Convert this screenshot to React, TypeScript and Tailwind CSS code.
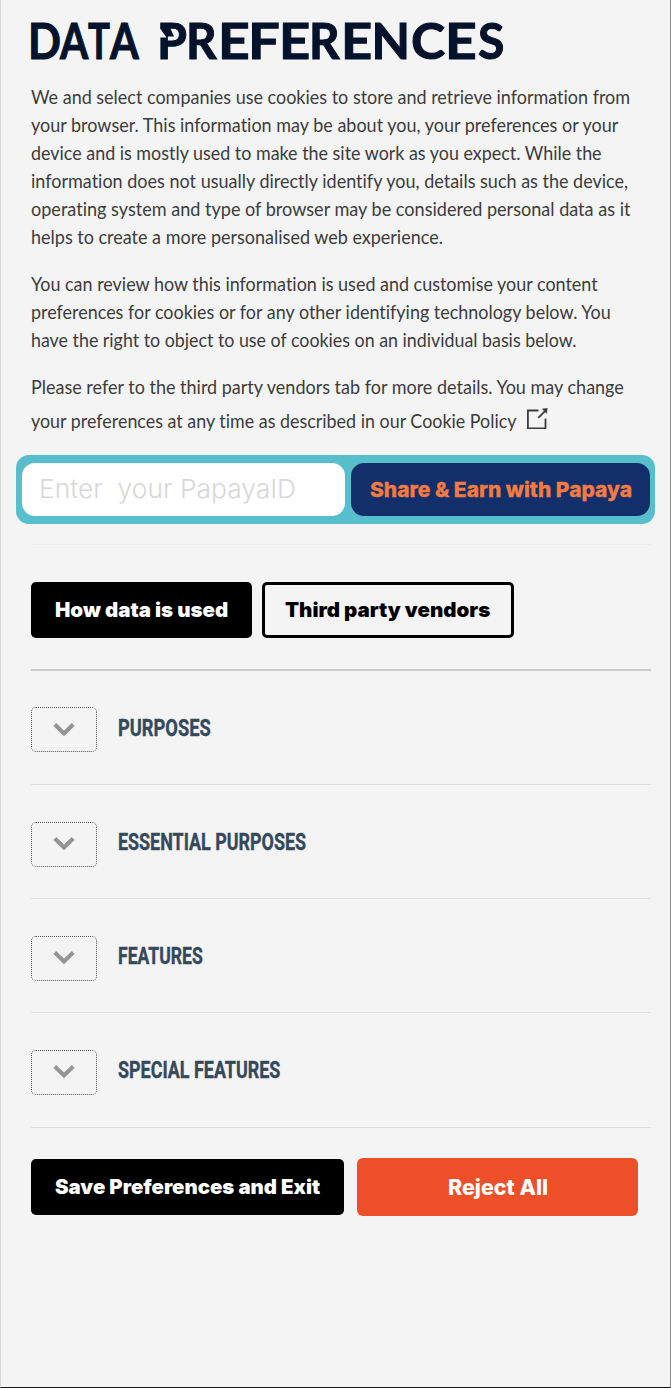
import { useLayoutEffect, useRef, useState } from "react";

/** One line of text stretched to an exact width. */
function Fit({ text, width, offset = 0, className = "" }: { text: string; width: number; offset?: number; className?: string }) {
  const ref = useRef<HTMLSpanElement>(null);
  const [scale, setScale] = useState(1);
  useLayoutEffect(() => {
    if (ref.current) setScale(width / ref.current.offsetWidth);
  }, [text, width]);
  return (
    <span className={`block text-left ${className}`} style={{ width, marginLeft: offset }}>
      <span ref={ref} className="inline-block origin-left whitespace-pre" style={{ transform: `scaleX(${scale})` }}>
        {text}
      </span>
    </span>
  );
}

type Line = [string, number];

/** Display lettering of the title: glyph, advance width, kerning before it. */
const title: [string, number, number][] = [
  ["D", 33, 2.5],
  ["A", 28.5, -0.5],
  ["T", 22, -0.8],
  ["A", 29, -0.5],
  ["P", 30, 18.8],
  ["R", 30.5, -1],
  ["E", 32, 1.5],
  ["F", 31.5, -2],
  ["E", 31.5, -0.5],
  ["R", 30.5, -1.5],
  ["E", 31.5, 1],
  ["N", 39, -1],
  ["C", 34, 0.5],
  ["E", 32, 0.5],
  ["S", 26, 0.5],
];

const intro: Line[] = [
  ["We and select companies use cookies to store and retrieve information from", 599],
  ["your browser. This information may be about you, your preferences or your", 587],
  ["device and is mostly used to make the site work as you expect. While the", 571],
  ["information does not usually directly identify you, details such as the device,", 597],
  ["operating system and type of browser may be considered personal data as it", 599],
  ["helps to create a more personalised web experience.", 412],
];

const review: Line[] = [
  ["You can review how this information is used and customise your content", 567],
  ["preferences for cookies or for any other identifying technology below. You", 580],
  ["have the right to object to use of cookies on an individual basis below.", 546],
];

const sections: Line[] = [
  ["PURPOSES", 93],
  ["ESSENTIAL PURPOSES", 188],
  ["FEATURES", 85],
  ["SPECIAL FEATURES", 162],
];

function Paragraph({ lines, className = "" }: { lines: Line[]; className?: string }) {
  return (
    <p className={`text-[19px] leading-[28.1px] ${className}`}>
      {lines.map(([text, width]) => (
        <Fit key={text} text={text} width={width} />
      ))}
    </p>
  );
}

function ExternalIcon() {
  return (
    <svg className="mt-[6px] ml-[9px] h-[22px] w-[22px]" viewBox="0 0 22 22" fill="none" stroke="#3c3c3c" strokeWidth="1.8">
      <path d="M12.5 3.500H1.900v18H19.500V11.500" />
      <path d="M12.3 10.8 19 4.1" />
      <path d="M15.800 1.800 21.600 1 20.800 6.800Z" fill="#3c3c3c" stroke="none" />
    </svg>
  );
}

export default function App() {
  return (
    <main className="flex h-[1388px] w-[671px] flex-col overflow-hidden border-r border-b border-l border-r-[#8c8c8c] border-b-[#151515] border-l-[#d4d4d4] bg-[#f4f4f4] pl-[30.4px] font-['Lato',sans-serif] text-[#3c3c3c] [font-variant-ligatures:none]">
      <h1
        aria-label="DATA PREFERENCES"
        className="relative -ml-[6px] flex h-[82.5px] items-start pt-[10px] text-[50px] leading-[60px] font-bold text-[#04122b] [-webkit-text-stroke:1px_#04122b]"
      >
        {title.map(([glyph, width, kern], i) => (
          <Fit key={i} text={glyph} width={width} offset={kern} />
        ))}
        <svg className="absolute top-[21px] left-[134px] h-[20px] w-[18px]" viewBox="0 0 18 20">
          <path d="M1.500 2H9L15 15.500H8L1.500 8Z" fill="#04122b" />
          <path d="M0 8H1.500L7.500 16.500H0Z" fill="#f4f4f4" />
        </svg>
      </h1>
      <Paragraph lines={intro} />
      <Paragraph lines={review} className="mt-[18.7px]" />
      <div className="mt-[19px] text-[19px] leading-[28px]">
        <Fit text="Please refer to the third party vendors tab for more details. You may change" width={593} />
        <div className="flex h-[34px] items-start">
          <Fit text="your preferences at any time as described in our Cookie Policy" width={486} className="pt-[5.5px]" />
          <ExternalIcon />
        </div>
      </div>

      <div className="mt-[19.8px] -ml-[15.4px] flex h-[69px] w-[639px] shrink-0 gap-[6px] rounded-[13px] bg-[#57bfcb] py-[8px] pr-[5px] pl-[6px] font-['Inter',sans-serif]">
        <div className="flex w-[323px] items-center rounded-[13px] bg-white pl-[17px] text-[26px] font-light text-[#d8d8d8]">
          <Fit text="Enter  your PapayaID" width={257} className="-mt-[2px]" />
        </div>
        <button className="flex flex-1 items-center justify-center rounded-[13px] bg-[#122f6b] text-[20.5px] font-extrabold text-[#f27b42] [-webkit-text-stroke:0.3px_#f27b42]">
          <Fit text="Share & Earn with Papaya" width={262} className="mt-[3px]" />
        </button>
      </div>

      <div className="mt-[20px] h-px w-[620px] shrink-0 bg-[#ececec]" />
      <div className="mt-[37px] flex h-[56px] shrink-0 gap-[10px] font-['Inter',sans-serif] text-[20px] font-black">
        <button className="flex w-[221px] items-center rounded-[5px] bg-black pl-[24px] text-white">
          <Fit text="How data is used" width={173} />
        </button>
        <button className="flex w-[252px] items-center rounded-[5px] border-[3px] border-black pl-[20px] text-black">
          <Fit text="Third party vendors" width={205} />
        </button>
      </div>

      <ul className="mt-[31px] w-[620px] border-t-2 border-[#cccccc]">
        {sections.map(([text, width]) => (
          <li key={text} className="flex h-[114.2px] items-center gap-[21px] border-b border-[#dfdfdf] pt-[5px]">
            <button className="flex h-[45px] w-[66px] items-center justify-center rounded-[5px] border border-dotted border-[#555555]">
              <svg className="h-[14px] w-[22px]" viewBox="0 0 22 14" fill="none" stroke="#949494" strokeWidth="4">
                <path d="M1.800 1.500 11 10.500 20.200 1.500" />
              </svg>
            </button>
            <Fit
              text={text}
              width={width}
              className="-mt-[4px] font-['Roboto',sans-serif] text-[24px] leading-[30px] font-bold text-[#34495c] [-webkit-text-stroke:0.4px_#34495c]"
            />
          </li>
        ))}
      </ul>

      <div className="mt-[30.2px] flex items-center gap-[13px] font-['Inter',sans-serif] text-white">
        <button className="flex h-[56px] w-[313px] items-center rounded-[5px] bg-black pl-[24px] text-[20px] font-black">
          <Fit text="Save Preferences and Exit" width={265} />
        </button>
        <button className="flex h-[58px] w-[281px] items-center justify-center rounded-[6px] bg-[#ed5028] text-[21px] font-extrabold">
          <Fit text="Reject All" width={100} className="mt-px" />
        </button>
      </div>
    </main>
  );
}
